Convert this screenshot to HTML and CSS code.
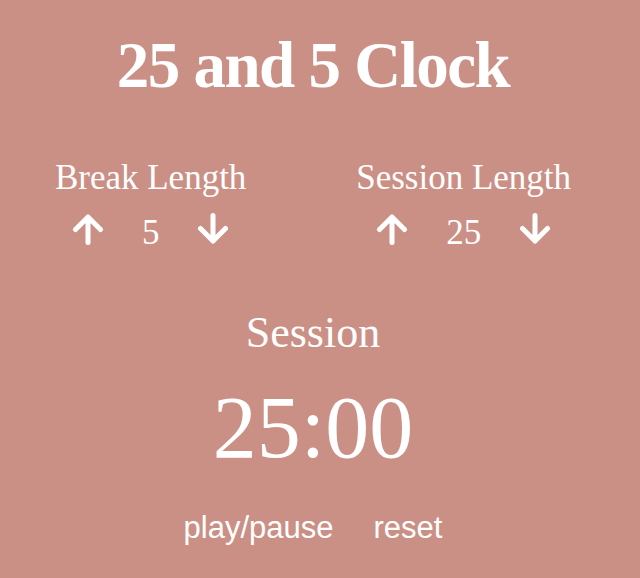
FILE: index.html
```html
<!DOCTYPE html>
<html>
<head>
<meta charset="utf-8">
<link rel="stylesheet" href="styles.css">
</head>
<body>
<div class="app">
  <h1 class="title">25 and 5 Clock</h1>
  <div class="lengths">
    <div class="length">
      <div class="label">Break Length</div>
      <div class="controls">
        <button class="arrow" aria-label="increment break"><svg viewBox="0 0 32 32" width="32" height="32"><path d="M16 29.5V4M3.5 16.5L16 4L28.5 16.5"/></svg></button>
        <span class="value">5</span>
        <button class="arrow" aria-label="decrement break"><svg viewBox="0 0 32 32" width="32" height="32"><path d="M16 2.5V28M3.5 15.5L16 28L28.5 15.5"/></svg></button>
      </div>
    </div>
    <div class="length">
      <div class="label">Session Length</div>
      <div class="controls">
        <button class="arrow" aria-label="increment session"><svg viewBox="0 0 32 32" width="32" height="32"><path d="M16 29.5V4M3.5 16.5L16 4L28.5 16.5"/></svg></button>
        <span class="value">25</span>
        <button class="arrow" aria-label="decrement session"><svg viewBox="0 0 32 32" width="32" height="32"><path d="M16 2.5V28M3.5 15.5L16 28L28.5 15.5"/></svg></button>
      </div>
    </div>
  </div>
  <div class="timer-label">Session</div>
  <div class="time">25:00</div>
  <div class="actions">
    <button class="action">play/pause</button>
    <button class="action">reset</button>
  </div>
</div>
</body>
</html>
```
FILE: styles.css
```css
html, body {
  margin: 0;
  padding: 0;
  background: #cb9085;
  height: 100%;
}
body {
  color: #fff;
  font-family: "Liberation Serif", "Times New Roman", serif;
}
.app {
  width: 626px;
  text-align: center;
}
.title {
  margin: 33px 0 0;
  font-size: 65px;
  line-height: 64px;
  font-weight: bold;
  letter-spacing: -1.5px;
}
.lengths {
  display: flex;
  justify-content: space-around;
  margin-top: 61px;
}
.length {
  display: flex;
  flex-direction: column;
  align-items: center;
}
.label {
  font-size: 35px;
  line-height: 40px;
}
.controls {
  display: flex;
  align-items: center;
  gap: 38px;
  margin-top: 15px;
  height: 32px;
}
.arrow {
  background: none;
  border: 0;
  padding: 0;
  width: 32px;
  height: 32px;
  display: block;
}
.arrow svg {
  display: block;
  fill: none;
  stroke: #fff;
  stroke-width: 5;
  stroke-linecap: round;
  stroke-linejoin: round;
}
.value {
  font-size: 35px;
  line-height: 32px;
  padding-top: 7px;
}
.timer-label {
  margin-top: 63px;
  font-size: 44px;
  line-height: 50px;
}
.time {
  margin-top: 20px;
  font-size: 88px;
  line-height: 100px;
}
.actions {
  display: flex;
  justify-content: center;
  gap: 40px;
  margin-top: 32px;
}
.action {
  background: none;
  border: 0;
  padding: 0;
  color: #fff;
  font-family: "Liberation Sans", Arial, sans-serif;
  font-size: 31px;
  line-height: 36px;
}
```
